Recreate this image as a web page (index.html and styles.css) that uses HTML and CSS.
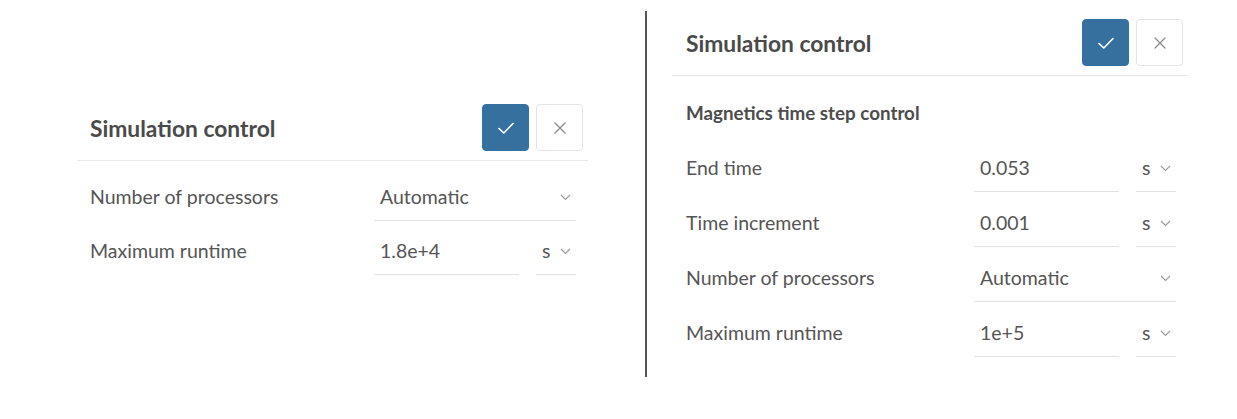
FILE: index.html
```html
<!DOCTYPE html>
<html>
<head>
<meta charset="utf-8">
<link rel="stylesheet" href="styles.css">
</head>
<body>
<div class="page">
  <section class="panel panel-left">
    <header class="panel-head">
      <h2 class="panel-title">Simulation control</h2>
      <div class="actions">
        <button class="btn btn-ok" aria-label="Apply">
          <svg width="18" height="14" viewBox="0 0 18 14"><path d="M2 7.5 L6.8 12 L16 2.5" fill="none" stroke="#fff" stroke-width="1.6" stroke-linecap="round" stroke-linejoin="round"/></svg>
        </button>
        <button class="btn btn-cancel" aria-label="Cancel">
          <svg width="12" height="12" viewBox="0 0 12 12"><path d="M1 1 L11 11 M11 1 L1 11" fill="none" stroke="#8a8a8a" stroke-width="1.3" stroke-linecap="round"/></svg>
        </button>
      </div>
    </header>
    <div class="rows rows-left">
      <div class="row">
        <span class="label">Number of processors</span>
        <div class="field select">
          <span class="value">Automatic</span>
          <svg class="chev" width="11" height="7" viewBox="0 0 11 7"><path d="M1 1 L5.5 5.5 L10 1" fill="none" stroke="#9a9a9a" stroke-width="1.1"/></svg>
        </div>
      </div>
      <div class="row">
        <span class="label">Maximum runtime</span>
        <div class="field input"><span class="value">1.8e+4</span></div>
        <div class="field unit">
          <span class="value">s</span>
          <svg class="chev" width="11" height="7" viewBox="0 0 11 7"><path d="M1 1 L5.5 5.5 L10 1" fill="none" stroke="#9a9a9a" stroke-width="1.1"/></svg>
        </div>
      </div>
    </div>
  </section>

  <div class="divider"></div>

  <section class="panel panel-right">
    <header class="panel-head">
      <h2 class="panel-title">Simulation control</h2>
      <div class="actions">
        <button class="btn btn-ok" aria-label="Apply">
          <svg width="18" height="14" viewBox="0 0 18 14"><path d="M2 7.5 L6.8 12 L16 2.5" fill="none" stroke="#fff" stroke-width="1.6" stroke-linecap="round" stroke-linejoin="round"/></svg>
        </button>
        <button class="btn btn-cancel" aria-label="Cancel">
          <svg width="12" height="12" viewBox="0 0 12 12"><path d="M1 1 L11 11 M11 1 L1 11" fill="none" stroke="#8a8a8a" stroke-width="1.3" stroke-linecap="round"/></svg>
        </button>
      </div>
    </header>
    <h3 class="section-title">Magnetics time step control</h3>
    <div class="rows rows-right">
      <div class="row">
        <span class="label">End time</span>
        <div class="field input"><span class="value">0.053</span></div>
        <div class="field unit">
          <span class="value">s</span>
          <svg class="chev" width="11" height="7" viewBox="0 0 11 7"><path d="M1 1 L5.5 5.5 L10 1" fill="none" stroke="#9a9a9a" stroke-width="1.1"/></svg>
        </div>
      </div>
      <div class="row">
        <span class="label">Time increment</span>
        <div class="field input"><span class="value">0.001</span></div>
        <div class="field unit">
          <span class="value">s</span>
          <svg class="chev" width="11" height="7" viewBox="0 0 11 7"><path d="M1 1 L5.5 5.5 L10 1" fill="none" stroke="#9a9a9a" stroke-width="1.1"/></svg>
        </div>
      </div>
      <div class="row">
        <span class="label">Number of processors</span>
        <div class="field select">
          <span class="value">Automatic</span>
          <svg class="chev" width="11" height="7" viewBox="0 0 11 7"><path d="M1 1 L5.5 5.5 L10 1" fill="none" stroke="#9a9a9a" stroke-width="1.1"/></svg>
        </div>
      </div>
      <div class="row">
        <span class="label">Maximum runtime</span>
        <div class="field input"><span class="value">1e+5</span></div>
        <div class="field unit">
          <span class="value">s</span>
          <svg class="chev" width="11" height="7" viewBox="0 0 11 7"><path d="M1 1 L5.5 5.5 L10 1" fill="none" stroke="#9a9a9a" stroke-width="1.1"/></svg>
        </div>
      </div>
    </div>
  </section>
</div>
</body>
</html>
```

FILE: styles.css
```css
* { box-sizing: border-box; }

html, body {
  margin: 0;
  padding: 0;
  background: #fff;
}

body {
  font-family: Lato, "Open Sans", "Liberation Sans", sans-serif;
  color: #555;
}

.page {
  display: flex;
  align-items: flex-start;
  width: 1237px;
  height: 419px;
}

.panel-left {
  width: 510px;
  margin-left: 78px;
  margin-top: 96px;
}

.divider {
  width: 2px;
  height: 366px;
  background: #555;
  margin-left: 57px;
  margin-top: 11px;
}

.panel-right {
  width: 516px;
  margin-left: 25px;
  margin-top: 11px;
}

.panel-head {
  display: flex;
  align-items: center;
  justify-content: space-between;
  padding: 8px 5px 9px 12px;
  border-bottom: 1px solid #e6e6e6;
}

.panel-right .panel-head {
  padding-left: 14px;
}

.panel-title {
  margin: 0;
  font-size: 22.8px;
  line-height: 28px;
  font-weight: 700;
  color: #4a4a4a;
}

.actions {
  display: flex;
  gap: 7px;
}

.btn {
  width: 47px;
  height: 47px;
  border-radius: 4px;
  display: flex;
  align-items: center;
  justify-content: center;
  padding: 0;
  margin: 0;
}

.btn-ok {
  background: #36709f;
  border: 1px solid #36709f;
}

.btn-cancel {
  background: #fff;
  border: 1px solid #e4e4e4;
}

.section-title {
  margin: 25px 0 0 14px;
  font-size: 18.8px;
  line-height: 24px;
  font-weight: 700;
  color: #4d4d4d;
}

.rows {
  display: flex;
  flex-direction: column;
  padding: 0 12px;
}

.rows-left {
  padding-top: 20px;
  gap: 14px;
}

.rows-right {
  padding-top: 27px;
  padding-left: 14px;
  gap: 15px;
}

.row {
  display: flex;
  align-items: flex-start;
  height: 40px;
}

.label {
  flex: 1;
  font-size: 19.5px;
  line-height: 24px;
  padding-top: 4px;
  color: #555;
}

.field {
  height: 40px;
  padding-top: 4px;
  border-bottom: 1px solid #e2e2e2;
  display: flex;
  align-items: flex-start;
  font-size: 19.5px;
  line-height: 24px;
  color: #555;
}

.field .value {
  padding-left: 6px;
}

.input {
  width: 145px;
}

.unit {
  width: 40px;
  margin-left: 17px;
  justify-content: space-between;
  padding-right: 5px;
}

.select {
  width: 202px;
  justify-content: space-between;
  padding-right: 5px;
}

.chev {
  margin-top: 9px;
}
```
